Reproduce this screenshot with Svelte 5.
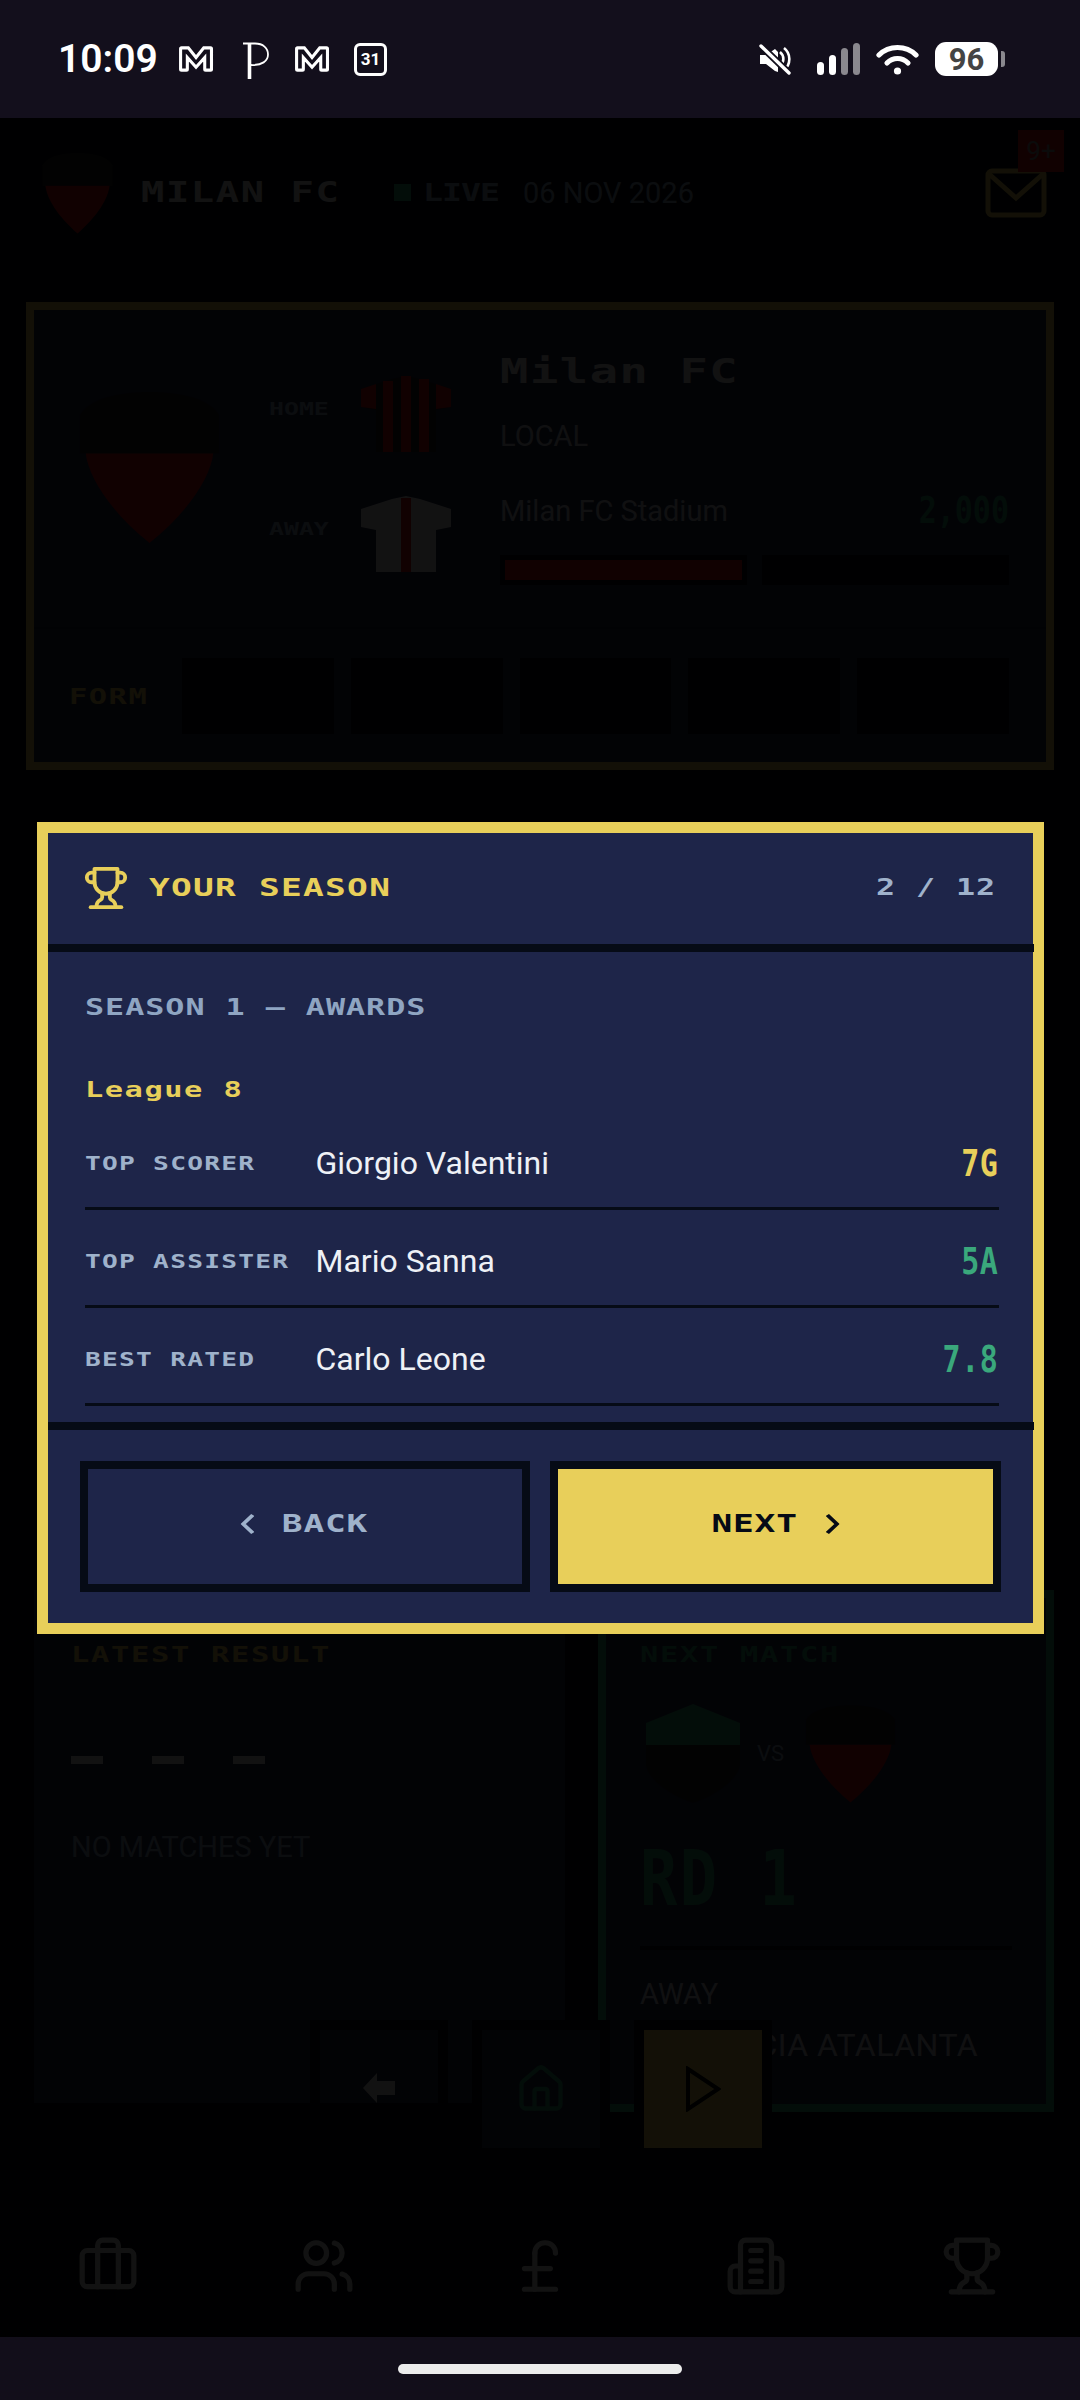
<script>
	const awards = [
		{ label: 'TOP SCORER', name: 'Giorgio Valentini', value: '7G', tone: 'gold' },
		{ label: 'TOP ASSISTER', name: 'Mario Sanna', value: '5A', tone: 'green' },
		{ label: 'BEST RATED', name: 'Carlo Leone', value: '7.8', tone: 'green' }
	];
	const formSlots = [0, 1, 2, 3, 4];
	const trophy = ['M6 9H4.5a2.5 2.5 0 0 1 0-5H6', 'M18 9h1.5a2.5 2.5 0 0 0 0-5H18', 'M4 22h16', 'M10 14.66V17c0 .55-.47.98-.97 1.21C7.85 18.75 7 20.24 7 22', 'M14 14.66V17c0 .55.47.98.97 1.21C16.15 18.75 17 20.24 17 22', 'M18 2H6v7a6 6 0 0 0 12 0V2Z'];
	const tabs = [
		['M16 20V4a2 2 0 0 0-2-2h-4a2 2 0 0 0-2 2v16', 'M4 6h16a2 2 0 0 1 2 2v10a2 2 0 0 1-2 2H4a2 2 0 0 1-2-2V8a2 2 0 0 1 2-2Z'],
		['M16 21v-2a4 4 0 0 0-4-4H6a4 4 0 0 0-4 4v2', 'M9 3a4 4 0 1 0 0 8 4 4 0 0 0 0-8Z', 'M22 21v-2a4 4 0 0 0-3-3.87', 'M16 3.13a4 4 0 0 1 0 7.75'],
		['M18 7c0-5.33-8-5.33-8 0', 'M10 7v14', 'M6 21h12', 'M6 13h10'],
		['M6 22V4a2 2 0 0 1 2-2h8a2 2 0 0 1 2 2v18Z', 'M6 12H4a2 2 0 0 0-2 2v6a2 2 0 0 0 2 2h2', 'M18 9h2a2 2 0 0 1 2 2v9a2 2 0 0 1-2 2h-2', 'M10 6h4', 'M10 10h4', 'M10 14h4', 'M10 18h4'],
		trophy
	];
	const gmail = 'M2 3h7l8 10 8-10h7a1 1 0 0 1 1 1v21a1 1 0 0 1-1 1h-5a1 1 0 0 1-1-1V13l-9 10-9-10v12a1 1 0 0 1-1 1H2a1 1 0 0 1-1-1V4a1 1 0 0 1 1-1Z';
</script>

{#snippet crest(top, bottom, w, h)}
	<svg class="crest" width={w} height={h} viewBox="0 0 100 160" preserveAspectRatio="none">
		<path d="M50 2C74 2 92 10 98 26V66H2V26C8 10 26 2 50 2Z" fill={top} />
		<path d="M6 66H94C92 90 78 125 50 159C22 125 8 90 6 66Z" fill={bottom} />
	</svg>
{/snippet}

{#snippet stroke(paths, size, sw)}
	<svg width={size} height={size} viewBox="0 0 24 24" fill="none" stroke="currentColor" stroke-width={sw} stroke-linecap="round" stroke-linejoin="round">
		{#each paths as d}
			<path {d} />
		{/each}
	</svg>
{/snippet}

<div class="app">
	<div class="statusbar">
		<span class="time">10:09</span>
		<svg class="mail-m" width="36" height="28" viewBox="0 0 36 29" fill="none" stroke="#fff" stroke-width="3.2"><path d={gmail} /></svg>
		<svg class="p-logo" width="28" height="38" viewBox="0 0 28 38" fill="none" stroke="#fff" stroke-width="1.8">
			<path d="M1 1.5H13C21 1.5 26 6 26 12.5C26 19 20 23.5 9 23" />
			<path d="M7.5 1.5V37" stroke-width="3.6" />
		</svg>
		<svg class="mail-m second" width="36" height="28" viewBox="0 0 36 29" fill="none" stroke="#fff" stroke-width="3.2"><path d={gmail} /></svg>
		<span class="cal">31</span>
		<span class="grow"></span>
		<svg class="mute" width="32" height="31" viewBox="0 0 32 31">
			<path d="M1 11h6l9 -6 3 3v20l-3 -1-9-7H1Z" fill="#fff" />
			<path d="M21 8a9 9 0 0 1 0 14M25 4a14 14 0 0 1 0 22" fill="none" stroke="#fff" stroke-width="2.6" />
			<path d="M2 2 30 29" stroke="#130f1c" stroke-width="7" />
			<path d="M2 2 30 29" stroke="#fff" stroke-width="3.4" stroke-linecap="round" />
		</svg>
		<div class="signal">
			<i class="b1"></i><i class="b2"></i><i class="b3"></i><i class="b4"></i>
		</div>
		<svg class="wifi" width="43" height="31" viewBox="0 0 43 31" fill="none" stroke="#fff" stroke-width="5.2" stroke-linecap="round">
			<path d="M3 11C13 1 30 1 40 11" />
			<path d="M11 19C17 13 26 13 32 19" />
			<circle cx="21.5" cy="27" r="3.6" fill="#fff" stroke="none" />
		</svg>
		<div class="battery">96</div>
		<i class="nub"></i>
	</div>

	<header class="topbar">
		{@render crest('#222', '#d31414', 73, 82)}
		<span class="club px">MILAN FC</span>
		<i class="live-dot"></i>
		<span class="live px">LIVE</span>
		<span class="date">06 NOV 2026</span>
		<div class="inbox">
			<svg width="62" height="50" viewBox="0 0 62 50" fill="none" stroke="#e8cf5a" stroke-width="5"><rect x="3" y="3" width="56" height="44" rx="4" /><path d="M4 6 31 30 58 6" /></svg>
			<span class="badge">9+</span>
		</div>
	</header>

	<section class="club-card">
		<div class="club-top">
			<div class="big-crest">{@render crest('#222', '#d31414', 145, 154)}</div>
			<div class="kits">
				<div class="kit">
					<span class="kit-label px">HOME</span>
					<svg width="90" height="76" viewBox="0 0 90 76">
						<path d="M0 13 31 3 45 0 59 3 90 13V31L75 34V76H15V34L0 31Z" fill="#1a1a1a" />
						<path d="M0 13 15 8V33L0 31ZM75 8 90 13V31L75 33ZM22 5h10v71h-10ZM40 0h10v76h-10ZM58 3h10v73h-10Z" fill="#d31414" />
					</svg>
				</div>
				<div class="kit">
					<span class="kit-label px">AWAY</span>
					<svg width="90" height="76" viewBox="0 0 90 76">
						<path d="M0 13 31 3 45 0 59 3 90 13V31L75 34V76H15V34L0 31Z" fill="#e6e6e6" />
						<path d="M40 2h10v74h-10Z" fill="#d31414" />
					</svg>
				</div>
			</div>
			<div class="club-info">
				<h2 class="club-name px">Milan FC</h2>
				<p class="plain local">LOCAL</p>
				<div class="stadium">
					<span class="plain">Milan FC Stadium</span>
					<span class="capacity tall">2,000</span>
				</div>
				<div class="bars">
					<div class="bar"><i></i></div>
					<div class="bar"></div>
				</div>
			</div>
		</div>
		<div class="form-row">
			<span class="form-label px">FORM</span>
			{#each formSlots as slot (slot)}
				<div class="form-slot"></div>
			{/each}
		</div>
	</section>

	<div class="panels">
		<section class="latest">
			<h3 class="panel-title px gold-text">LATEST RESULT</h3>
			<div class="dashes"><i></i><i></i><i></i></div>
			<p class="plain none">NO MATCHES YET</p>
		</section>
		<section class="next-match">
			<h3 class="panel-title px green-text">NEXT MATCH</h3>
			<div class="versus">
				<svg class="crest" width="94" height="99" viewBox="0 0 94 99">
					<path d="M47 0 94 19V41H0V19Z" fill="#2fa36f" />
					<path d="M0 41H94V62C90 78 68 92 47 99 26 92 4 78 0 62Z" fill="#222" />
				</svg>
				<span class="vs">VS</span>
				{@render crest('#222', '#d31414', 93, 99)}
			</div>
			<div class="round tall">RD 1</div>
			<div class="next-divider"></div>
			<p class="plain venue">AWAY</p>
			<p class="plain rival">PROVINCIA ATALANTA</p>
		</section>
	</div>

	<div class="quick-nav">
		<div class="quick back-btn">
			<svg width="32" height="30" viewBox="0 0 32 30"><path d="M0 15 14 0V8H32V22H14V30Z" fill="#e6e6e6" /></svg>
		</div>
		<div class="quick home-btn">
			{@render stroke(['M3 10a2 2 0 0 1 .7-1.5l7-6a2 2 0 0 1 2.6 0l7 6A2 2 0 0 1 21 10v9a2 2 0 0 1-2 2H5a2 2 0 0 1-2-2Z', 'M15 21v-8a1 1 0 0 0-1-1h-4a1 1 0 0 0-1 1v8'], 52, 2)}
		</div>
		<div class="quick play-btn">
			<svg width="36" height="46" viewBox="0 0 36 46" fill="none" stroke="#000" stroke-width="4"><path d="M3 3 33 23 3 43Z" /></svg>
		</div>
	</div>

	<nav class="tabbar">
		{#each tabs as paths}
			<div class="tab">{@render stroke(paths, 62, 2)}</div>
		{/each}
	</nav>

	<div class="scrim">
		<div class="dialog">
			<div class="dialog-head">
				<span class="trophy">{@render stroke(trophy, 46, 2)}</span>
				<span class="dialog-title px">YOUR SEASON</span>
				<span class="step px">2 / 12</span>
			</div>
			<div class="dialog-body">
				<div class="season px">SEASON 1 — AWARDS</div>
				<div class="league px">League 8</div>
				{#each awards as row}
					<div class="award">
						<span class="award-label px">{row.label}</span>
						<span class="award-name">{row.name}</span>
						<span class="award-value tall {row.tone}">{row.value}</span>
					</div>
				{/each}
			</div>
			<div class="dialog-foot">
				<button class="btn">
					<span class="btn-inner px">
						<svg width="10" height="20" viewBox="0 0 10 20" fill="none" stroke="currentColor" stroke-width="3"><path d="M9 1 2 10 9 19" /></svg>
						BACK
					</span>
				</button>
				<button class="btn primary">
					<span class="btn-inner px">
						NEXT
						<svg width="10" height="20" viewBox="0 0 10 20" fill="none" stroke="currentColor" stroke-width="3"><path d="M1 1 8 10 1 19" /></svg>
					</span>
				</button>
			</div>
		</div>
	</div>

	<div class="homebar"><i></i></div>
</div>

<style>
	:global(body) {
		margin: 0;
		background: #000;
	}

	.app {
		position: relative;
		width: 1080px;
		height: 2400px;
		overflow: hidden;
		background: #05070f;
		font-family: Roboto, sans-serif;
		color: #e6e6e6;
	}

	h2, h3, p {
		margin: 0;
		font-weight: 400;
	}

	i {
		display: block;
	}

	/* wide bitmap look: mono bold stretched sideways */
	.px {
		font-family: 'DejaVu Sans Mono', monospace;
		font-weight: 700;
		white-space: nowrap;
		transform: scaleX(1.38);
		transform-origin: left center;
	}

	/* tall narrow numerals */
	.tall {
		font-family: 'DejaVu Sans Mono', monospace;
		font-weight: 700;
		transform: scaleY(1.23);
	}

	.plain {
		font-size: 29px;
		line-height: 32px;
		color: #c8ccd6;
	}

	/* status bar */
	.statusbar {
		position: relative;
		z-index: 3;
		display: flex;
		align-items: center;
		box-sizing: border-box;
		height: 118px;
		padding: 0 75px 0 58px;
		background: #130f1c;
		color: #fff;
	}

	.time {
		width: 121px;
		font-size: 39px;
		font-weight: 600;
		line-height: 118px;
	}

	.mail-m.second {
		margin-left: 25px;
	}

	.p-logo {
		margin-left: 27px;
		margin-top: 4px;
	}

	.cal {
		box-sizing: border-box;
		width: 33px;
		height: 33px;
		margin-left: 23px;
		border: 3px solid #fff;
		border-radius: 6px;
		font-size: 17px;
		font-weight: 700;
		line-height: 27px;
		text-align: center;
	}

	.grow {
		flex: 1;
	}

	.signal {
		display: flex;
		align-items: flex-end;
		gap: 5px;
		height: 32px;
		margin-left: 26px;
	}

	.signal i {
		width: 7px;
		border-radius: 4px;
		background: #fff;
	}

	.signal .b1 { height: 13px; }
	.signal .b2 { height: 20px; }
	.signal .b3 { height: 27px; background: #8a888e; }
	.signal .b4 { height: 32px; background: #8a888e; }

	.wifi {
		margin-left: 16px;
	}

	.battery {
		width: 63px;
		height: 34px;
		margin-left: 16px;
		border-radius: 11px;
		background: #fff;
		color: #444;
		font-size: 31px;
		font-weight: 700;
		line-height: 35px;
		text-align: center;
	}

	.nub {
		width: 4px;
		height: 16px;
		margin-left: 3px;
		border-radius: 0 3px 3px 0;
		background: #8a888e;
	}

	/* dimmed page */
	.topbar {
		display: flex;
		align-items: center;
		box-sizing: border-box;
		height: 149px;
		margin-bottom: 35px;
		padding: 0 33px 0 41px;
	}

	.club {
		width: 144px;
		margin-left: 27px;
		font-size: 28px;
		letter-spacing: 1.2px;
	}

	.live-dot {
		width: 17px;
		height: 17px;
		margin-left: 109px;
		background: #2fa36f;
	}

	.live {
		width: 55px;
		margin-left: 12px;
		font-size: 24px;
		letter-spacing: -0.7px;
		color: #8fa5c2;
	}

	.date {
		margin-left: 45px;
		font-size: 29px;
		color: #8fa5c2;
	}

	.inbox {
		position: relative;
		margin-left: auto;
		margin-top: 4px;
	}

	.badge {
		position: absolute;
		top: -38px;
		right: -17px;
		width: 46px;
		height: 42px;
		background: #d31414;
		font-size: 26px;
		line-height: 42px;
		text-align: center;
		color: #888;
	}

	.club-card {
		box-sizing: border-box;
		height: 468px;
		margin: 0 26px;
		border: 8px solid #e8cf5a;
		background: #1e2549;
	}

	.club-top {
		position: relative;
		display: flex;
		height: 317px;
		border-bottom: 2px solid #161c38;
	}

	.big-crest {
		margin: 80px 0 0 43px;
	}

	.kits {
		display: flex;
		flex-direction: column;
		gap: 44px;
		margin: 66px 0 0 47px;
	}

	.kit {
		display: flex;
		align-items: center;
		gap: 33px;
	}

	.kit-label {
		width: 59px;
		margin-bottom: 12px;
		font-size: 18px;
		color: #8fa5c2;
	}

	.club-info {
		flex: 1;
		margin: 43px 37px 0 49px;
	}

	.club-name {
		font-size: 34px;
		line-height: 36px;
		letter-spacing: 1.2px;
	}

	.local {
		margin-top: 31px;
	}

	.stadium {
		display: flex;
		justify-content: space-between;
		margin-top: 43px;
	}

	.capacity {
		font-size: 30px;
		line-height: 32px;
		color: #2fa36f;
	}

	.bars {
		display: flex;
		gap: 15px;
		margin-top: 28px;
	}

	.bar {
		flex: 1;
		box-sizing: border-box;
		height: 30px;
		border: 5px solid #060b16;
		background: #060b16;
	}

	.bar i {
		height: 100%;
		background: #d31414;
	}

	.form-row {
		display: flex;
		align-items: center;
		gap: 17px;
		padding: 29px 37px 0 35px;
	}

	.form-label {
		width: 96px;
		font-size: 22px;
		letter-spacing: 1.1px;
		color: #e8cf5a;
	}

	.form-slot {
		flex: 1;
		height: 76px;
		background: #060b16;
	}

	.panels {
		display: flex;
		align-items: flex-start;
		gap: 33px;
		margin: 820px 26px 0 34px;
	}

	.latest {
		box-sizing: border-box;
		width: 531px;
		height: 513px;
		padding: 56px 37px;
		background: #1e2549;
	}

	.panel-title {
		font-size: 22px;
		line-height: 17px;
		letter-spacing: 1.25px;
	}

	.gold-text { color: #e8cf5a; }
	.green-text { color: #2fa36f; }

	.dashes {
		display: flex;
		gap: 49px;
		margin-top: 93px;
	}

	.dashes i {
		width: 32px;
		height: 8px;
		background: #e6e6e6;
	}

	.none {
		margin-top: 67px;
		color: #8fa5c2;
	}

	.next-match {
		flex: 1;
		box-sizing: border-box;
		height: 522px;
		padding: 48px 34px;
		border: 8px solid #2fa36f;
		background: #1e2549;
	}

	.versus {
		display: flex;
		align-items: center;
		margin-top: 41px;
		margin-left: 6px;
	}

	.vs {
		margin: 0 20px 0 17px;
		font-size: 22px;
		color: #8fa5c2;
	}

	.round {
		margin-top: 46px;
		font-size: 62px;
		line-height: 60px;
		letter-spacing: 2.5px;
		color: #2fa36f;
	}

	.next-divider {
		height: 4px;
		margin-top: 37px;
		background: #060b16;
	}

	.venue {
		margin-top: 28px;
	}

	.rival {
		margin-top: 19px;
		font-size: 32px;
		letter-spacing: 0.5px;
		white-space: nowrap;
	}

	.quick-nav {
		position: absolute;
		top: 2020px;
		left: 310px;
		display: flex;
		gap: 24px;
	}

	.quick {
		display: flex;
		align-items: center;
		justify-content: center;
		box-sizing: border-box;
		width: 138px;
		height: 138px;
		border: 10px solid #060b16;
	}

	.back-btn {
		align-items: flex-start;
		padding-top: 43px;
	}

	.home-btn {
		background: #1e2549;
		color: #2fa36f;
	}

	.play-btn {
		background: #e8cf5a;
	}

	.tabbar {
		display: grid;
		grid-template-columns: repeat(5, 1fr);
		margin-top: 123px;
		color: #e6e6e6;
	}

	.tab {
		display: flex;
		justify-content: center;
	}

	/* dialog */
	.scrim {
		position: absolute;
		top: 118px;
		right: 0;
		bottom: 63px;
		left: 0;
		z-index: 2;
		display: flex;
		align-items: center;
		justify-content: center;
		background: rgba(0, 0, 0, 0.92);
	}

	.dialog {
		box-sizing: border-box;
		width: 1007px;
		height: 812px;
		border: 11px solid #e8cf5a;
		background: #1e2549;
	}

	.dialog-head {
		display: flex;
		align-items: center;
		box-sizing: border-box;
		height: 119px;
		padding: 0 38px 0 35px;
		border-bottom: 8px solid #060b16;
		margin-right: -1px;
	}

	.trophy {
		display: flex;
		color: #e8cf5a;
	}

	.dialog-title {
		margin-left: 20px;
		margin-bottom: 2px;
		font-size: 25px;
		letter-spacing: 0.9px;
		color: #e8cf5a;
	}

	.step {
		margin-left: auto;
		margin-bottom: 2px;
		font-size: 23px;
		letter-spacing: 0.65px;
		color: #9fb2cb;
		transform-origin: right center;
	}

	.dialog-body {
		box-sizing: border-box;
		height: 478px;
		padding: 40px 35px 0 37px;
		border-bottom: 8px solid #060b16;
		margin-right: -1px;
	}

	.season {
		font-size: 23px;
		line-height: 30px;
		letter-spacing: 0.7px;
		color: #8fa5c2;
	}

	.league {
		margin-top: 53px;
		margin-bottom: 7px;
		font-size: 22px;
		line-height: 30px;
		letter-spacing: 1.1px;
		color: #e8cf5a;
	}

	.award {
		display: flex;
		align-items: center;
		box-sizing: border-box;
		height: 98px;
		padding-top: 8px;
		border-bottom: 3px solid #060b16;
	}

	.award-label {
		width: 231px;
		flex-shrink: 0;
		font-size: 19px;
		letter-spacing: 0.9px;
		color: #9fb2cb;
	}

	.award-name {
		flex: 1;
		font-size: 32px;
		color: #eef1f6;
	}

	.award-value {
		font-size: 30px;
		letter-spacing: 0.6px;
	}

	.award-value.gold { color: #e8cf5a; }
	.award-value.green { color: #3aa87c; }

	.dialog-foot {
		display: grid;
		grid-template-columns: 1fr 1fr;
		gap: 20px;
		padding: 31px 32px 0;
	}

	.btn {
		display: flex;
		align-items: center;
		justify-content: center;
		height: 131px;
		padding: 0;
		border: 8px solid #060b16;
		background: #1e2549;
		font-size: 25px;
		letter-spacing: 0.6px;
		color: #9fb2cb;
	}

	.btn.primary {
		background: #e8cf5a;
		color: #060b16;
	}

	.btn-inner {
		display: inline-flex;
		align-items: center;
		gap: 20px;
		margin-bottom: 5px;
		transform-origin: center;
	}

	.homebar {
		position: absolute;
		right: 0;
		bottom: 0;
		left: 0;
		z-index: 3;
		height: 63px;
		background: #120e1a;
	}

	.homebar i {
		width: 284px;
		height: 10px;
		margin: 27px auto 0;
		border-radius: 5px;
		background: #ececec;
	}
</style>
